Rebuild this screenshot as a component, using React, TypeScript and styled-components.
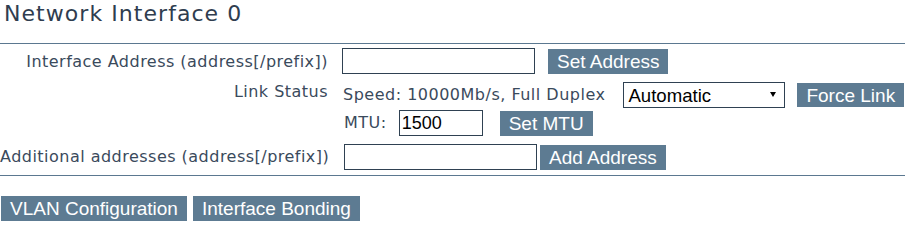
import React from "react";
import styled, { createGlobalStyle } from "styled-components";

const Global = createGlobalStyle`
  html, body { margin: 0; padding: 0; background: #fff; }
  body { font-family: "DejaVu Sans", Verdana, sans-serif; color: #3a4a5c; }
`;

const Page = styled.div`
  width: 905px;
`;

const Title = styled.h2`
  margin: 0;
  padding-left: 4px;
  font-family: "DejaVu Sans", Verdana, sans-serif;
  font-weight: normal;
  font-size: 22px;
  letter-spacing: 1.05px;
  line-height: 28px;
  color: #2f3d4f;
`;

const Rule = styled.hr<{ $top: number }>`
  margin: ${(p) => p.$top}px 0 0 0;
  border: 0;
  height: 1px;
  background: #5b7890;
`;

const Form = styled.div`
  display: grid;
  grid-template-columns: 328px auto;
  justify-content: start;
  column-gap: 14px;
  row-gap: 8px;
  margin-top: 4px;
`;

const Label = styled.div<{ $pad?: number }>`
  text-align: right;
  font-size: 16px;
  letter-spacing: 0.48px;
  line-height: 20px;
  padding-top: ${(p) => p.$pad ?? 0}px;
  white-space: nowrap;
`;

const Cell = styled.div<{ $shift?: number }>`
  display: flex;
  flex-direction: column;
  gap: 2px;
  margin-left: ${(p) => p.$shift ?? 0}px;
`;

const Line = styled.div<{ $gap?: number }>`
  display: flex;
  align-items: center;
  gap: ${(p) => p.$gap ?? 12}px;
  height: 26px;
  & > * { flex-shrink: 0; }
`;

const Text = styled.span<{ $indent?: number; $after?: number }>`
  font-size: 16px;
  letter-spacing: 0.5px;
  line-height: 20px;
  white-space: nowrap;
  padding-left: ${(p) => p.$indent ?? 0}px;
  margin-right: ${(p) => p.$after ?? 0}px;
`;

const Field = styled.input<{ $w: number }>`
  box-sizing: border-box;
  width: ${(p) => p.$w}px;
  height: 26px;
  margin: 0;
  border: 1px solid #2f4152;
  border-radius: 0;
  padding: 0 2px;
  font-family: "Liberation Sans", Arial, sans-serif;
  font-size: 18px;
  color: #000;
  background: #fff;
  outline: none;
`;

const Button = styled.button<{ $before?: number; $h?: number }>`
  box-sizing: border-box;
  height: ${(p) => p.$h ?? 25}px;
  margin: 0 0 0 ${(p) => p.$before ?? 0}px;
  border: 0;
  border-radius: 0;
  padding: 0 9px;
  background: #5d7b92;
  color: #fff;
  font-family: "Liberation Sans", Arial, sans-serif;
  font-size: 19px;
  line-height: 25px;
  white-space: nowrap;
  cursor: pointer;
`;

const SelectWrap = styled.div`
  position: relative;
  width: 162px;
  height: 26px;
`;

const Select = styled.select`
  box-sizing: border-box;
  appearance: none;
  -webkit-appearance: none;
  width: 100%;
  height: 26px;
  margin: 0;
  border: 1px solid #2f4152;
  border-radius: 0;
  padding: 0 0 0 4px;
  background: #fff;
  color: #000;
  font-family: "Liberation Sans", Arial, sans-serif;
  font-size: 18.6px;
  outline: none;
`;

const Arrow = styled.svg`
  position: absolute;
  right: 9px;
  top: 10px;
  pointer-events: none;
`;

const Actions = styled.div`
  display: flex;
  gap: 6px;
  margin-top: 20px;
  padding-left: 1px;
`;

export default function App() {
  return (
    <Page>
      <Global />
      <Title>Network Interface 0</Title>
      <Rule $top={15} />
      <Form>
        <Label $pad={4}>Interface Address (address[/prefix])</Label>
        <Cell>
          <Line $gap={13}>
            <Field $w={193} defaultValue="" />
            <Button>Set Address</Button>
          </Line>
        </Cell>

        <Label $pad={0}>Link Status</Label>
        <Cell $shift={1}>
          <Line $gap={0}>
            <Text $after={18}>Speed: 10000Mb/s, Full Duplex</Text>
            <SelectWrap>
              <Select defaultValue="auto">
                <option value="auto">Automatic</option>
              </Select>
              <Arrow width="6" height="5" viewBox="0 0 6 5">
                <path d="M0 0 L6 0 L3 5 Z" fill="#000" />
              </Arrow>
            </SelectWrap>
            <Button $before={12} $h={24}>Force Link</Button>
          </Line>
          <Line $gap={0}>
            <Text $indent={1} $after={12}>MTU:</Text>
            <Field $w={84} defaultValue="1500" />
            <Button $before={17}>Set MTU</Button>
          </Line>
        </Cell>

        <Label $pad={3}>Additional addresses (address[/prefix])</Label>
        <Cell $shift={2}>
          <Line $gap={3}>
            <Field $w={193} defaultValue="" />
            <Button>Add Address</Button>
          </Line>
        </Cell>
      </Form>
      <Rule $top={5} />
      <Actions>
        <Button>VLAN Configuration</Button>
        <Button>Interface Bonding</Button>
      </Actions>
    </Page>
  );
}
